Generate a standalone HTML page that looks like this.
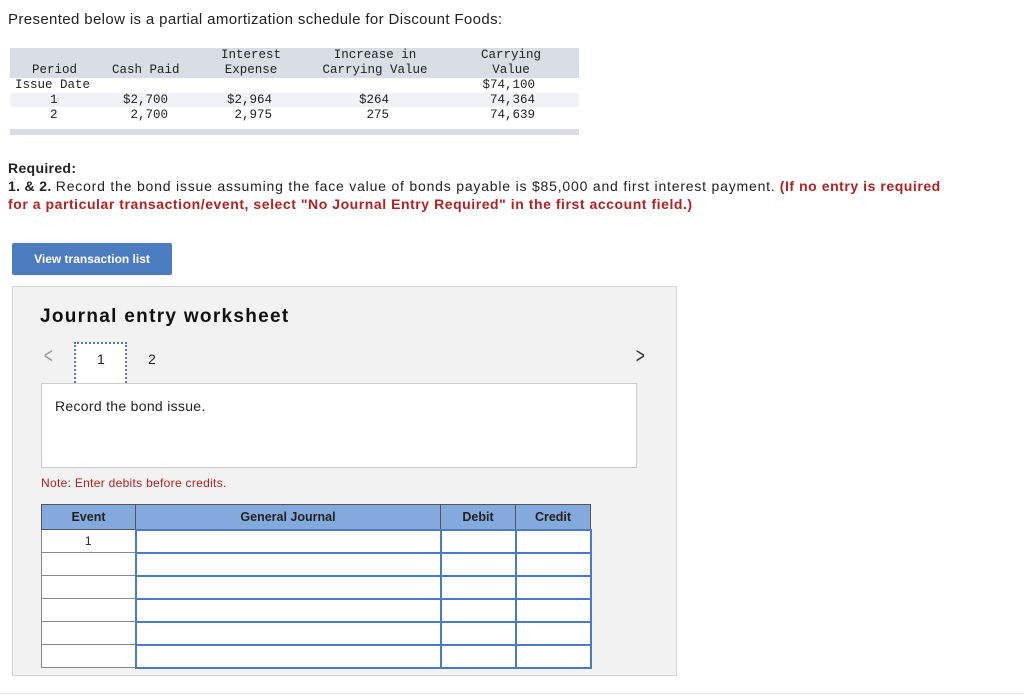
<!DOCTYPE html>
<html><head><style>
body{margin:0;width:1024px;height:699px;background:#fff;font-family:"Liberation Sans",sans-serif;position:relative;overflow:hidden;color:#222}
.a{position:absolute}
.m{font-family:"Liberation Mono",monospace;font-size:12.5px;color:#222;position:absolute;white-space:pre;line-height:15px}
.c{text-align:center}.r{text-align:right}
td{padding:0}
</style></head><body>
<div class="a" style="left:8px;top:11px;font-size:15px;letter-spacing:0.37px">Presented below is a partial amortization schedule for Discount Foods:</div>
<div class="a" style="left:10px;top:48px;width:569px;height:30px;background:#d9dde6"></div>
<div class="a" style="left:10px;top:93px;width:569px;height:14px;background:#f1f2f5"></div>
<div class="a" style="left:10px;top:129px;width:569px;height:6px;background:#d9dde6"></div>
<div class="m" style="left:32px;top:63px">Period</div>
<div class="m" style="left:112px;top:63px">Cash Paid</div>
<div class="m c" style="left:200px;width:102px;top:48px">Interest
Expense</div>
<div class="m c" style="left:310px;width:130px;top:48px">Increase in
Carrying Value</div>
<div class="m c" style="left:462px;width:98px;top:48px">Carrying
Value</div>
<div class="m" style="left:15px;top:78px">Issue Date</div>
<div class="m r" style="left:460px;width:75px;top:78px">$74,100</div>
<div class="m" style="left:50px;top:93px">1</div>
<div class="m" style="left:50px;top:108px">2</div>
<div class="m r" style="left:90px;width:78px;top:93px">$2,700
 2,700</div>
<div class="m r" style="left:190px;width:82px;top:93px">$2,964
 2,975</div>
<div class="m r" style="left:320px;width:69px;top:93px">$264
 275</div>
<div class="m r" style="left:460px;width:75px;top:93px">74,364
74,639</div>

<div class="a" style="left:8px;top:159px;font-size:14px;line-height:18px;width:1000px;letter-spacing:0.33px;white-space:nowrap"><b>Required:</b><br><b>1. &amp; 2.</b> <span style="letter-spacing:0.8px">Record the bond issue assuming the face value of bonds payable is $85,000 and first interest payment.</span> <b style="color:#b22222;letter-spacing:0.55px">(If no entry is required<br>for a particular transaction/event, select "No Journal Entry Required" in the first account field.)</b></div>

<div class="a" style="left:12px;top:243px;width:160px;height:32px;background:#4c7cc0;border-radius:2px;color:#fff;font-size:12px;font-weight:bold;line-height:32px;text-align:center">View transaction list</div>

<div class="a" style="left:12px;top:286px;width:663px;height:388px;background:#f2f2f2;border:1px solid #d5d5d5"></div>
<div class="a" style="left:40px;top:306px;font-size:19px;font-weight:bold;color:#111;letter-spacing:1.3px">Journal entry worksheet</div>
<div class="a" style="left:42px;top:343px;font-size:22px;color:#999;transform:scaleX(.7)">&lt;</div>
<div class="a" style="left:634px;top:343px;font-size:22px;color:#333;transform:scaleX(.7)">&gt;</div>
<div class="a" style="left:74px;top:342px;width:53px;height:44px;background:#fff;border:2px dotted #4c7cc0;box-sizing:border-box"></div>
<div class="a" style="left:97px;top:351px;font-size:14px">1</div>
<div class="a" style="left:148px;top:351px;font-size:14px">2</div>
<div class="a" style="left:41px;top:383px;width:596px;height:85px;background:#fff;border:1px solid #ccc;box-sizing:border-box"></div>
<div class="a" style="left:55px;top:398px;font-size:14px;letter-spacing:0.3px">Record the bond issue.</div>
<div class="a" style="left:41px;top:476px;font-size:12px;color:#b22222;letter-spacing:0.3px">Note: Enter debits before credits.</div>

<table class="a" style="left:41px;top:504px;border-collapse:collapse;font-size:12.5px">
<tr style="height:25px;background:#84a9dc;font-weight:bold">
<td style="width:93px;border:1px solid #555;text-align:center">Event</td>
<td style="width:304px;border:1px solid #555;text-align:center">General Journal</td>
<td style="width:74px;border:1px solid #555;text-align:center">Debit</td>
<td style="width:74px;border:1px solid #555;text-align:center">Credit</td></tr>
<tr style="height:23px;background:#fff"><td style="border:1px solid #888;text-align:center;font-size:12px;vertical-align:top;padding-top:4px">1</td><td style="border:2px solid #4c7cc0"></td><td style="border:2px solid #4c7cc0"></td><td style="border:2px solid #4c7cc0"></td></tr>
<tr style="height:23px;background:#fff"><td style="border:1px solid #888"></td><td style="border:2px solid #4c7cc0"></td><td style="border:2px solid #4c7cc0"></td><td style="border:2px solid #4c7cc0"></td></tr>
<tr style="height:23px;background:#fff"><td style="border:1px solid #888"></td><td style="border:2px solid #4c7cc0"></td><td style="border:2px solid #4c7cc0"></td><td style="border:2px solid #4c7cc0"></td></tr>
<tr style="height:23px;background:#fff"><td style="border:1px solid #888"></td><td style="border:2px solid #4c7cc0"></td><td style="border:2px solid #4c7cc0"></td><td style="border:2px solid #4c7cc0"></td></tr>
<tr style="height:23px;background:#fff"><td style="border:1px solid #888"></td><td style="border:2px solid #4c7cc0"></td><td style="border:2px solid #4c7cc0"></td><td style="border:2px solid #4c7cc0"></td></tr>
<tr style="height:23px;background:#fff"><td style="border:1px solid #888"></td><td style="border:2px solid #4c7cc0"></td><td style="border:2px solid #4c7cc0"></td><td style="border:2px solid #4c7cc0"></td></tr>
</table>
<div class="a" style="left:0;top:693px;width:1024px;height:1px;background:#e6e6e6"></div>
</body></html>
